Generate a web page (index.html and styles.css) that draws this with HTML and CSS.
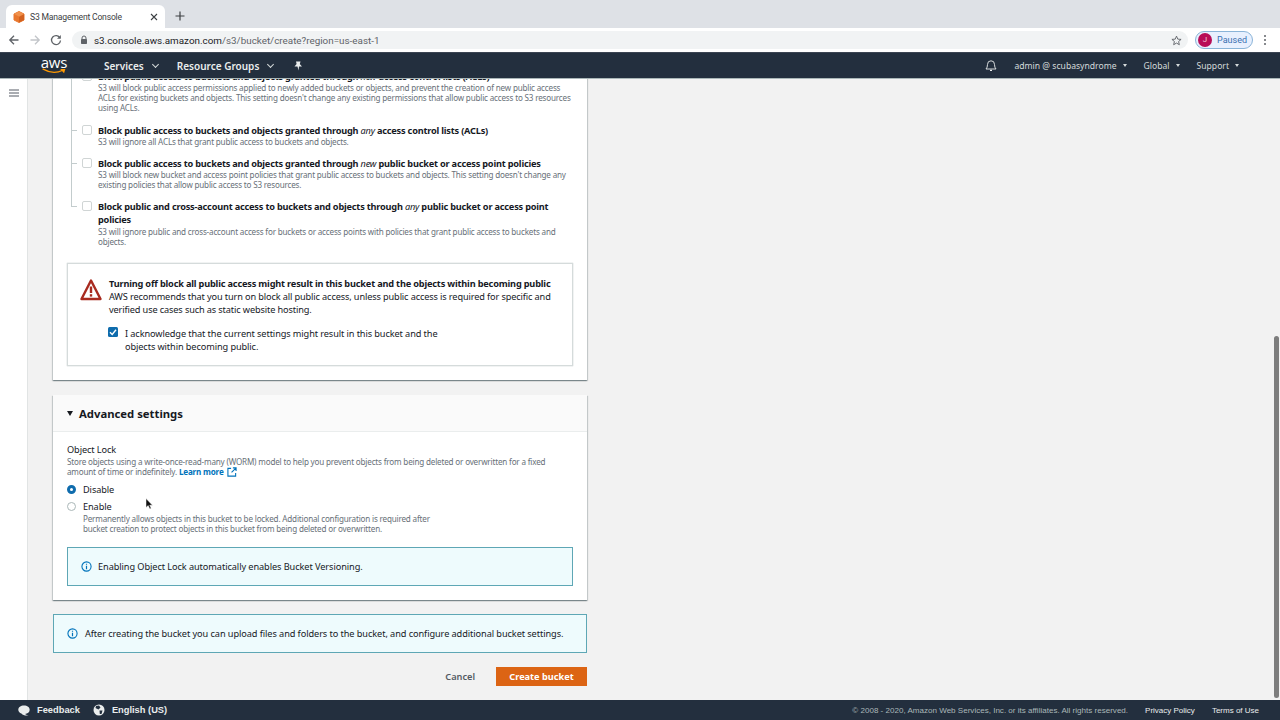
FILE: index.html
```html
<!DOCTYPE html>
<html>
<head>
  <title>S3 Management Console</title>
  <link rel="stylesheet" href="styles.css">
</head>
<body>
  <!-- Browser chrome -->
  <div class="tabstrip">
    <div class="tab">
      <svg class="favicon" viewBox="0 0 12 12" width="12" height="12">
        <path d="M6 0.5 L11 3 V9 L6 11.5 L1 9 V3 Z" fill="#e8772e" stroke="#e8772e" stroke-linejoin="round"/>
        <path d="M6 6 L11 3 V9 L6 11.5 Z" fill="#d2611f"/>
        <path d="M6 0.5 L11 3 L6 5.5 L1 3 Z" fill="#f0914c"/>
      </svg>
      <span class="tab-title">S3 Management Console</span>
      <svg class="tab-close" viewBox="0 0 8 8" width="8" height="8"><path d="M1 1 L7 7 M7 1 L1 7" stroke="#3c4043" stroke-width="1.1"/></svg>
    </div>
    <svg class="tab-new" viewBox="0 0 10 10" width="10" height="10"><path d="M5 0.5 V9.5 M0.5 5 H9.5" stroke="#3c4043" stroke-width="1.2"/></svg>
  </div>
  <div class="toolbar">
    <svg class="tool-icon" viewBox="0 0 12 12" width="12" height="12"><path d="M10.5 6 H2 M6 1.8 L1.8 6 L6 10.2" fill="none" stroke="#5f6368" stroke-width="1.3"/></svg>
    <svg class="tool-icon" viewBox="0 0 12 12" width="12" height="12"><path d="M1.5 6 H10 M6 1.8 L10.2 6 L6 10.2" fill="none" stroke="#c2c5c9" stroke-width="1.3"/></svg>
    <svg class="tool-icon" viewBox="0 0 12 12" width="12" height="12"><path d="M10 4 A4.5 4.5 0 1 0 10.5 6.5" fill="none" stroke="#5f6368" stroke-width="1.3"/><path d="M10.8 1 V4.8 H7 Z" fill="#5f6368"/></svg>
    <div class="omnibox">
      <svg class="lock" viewBox="0 0 8 10" width="8" height="10"><path d="M2 4.5 V3 A2 2 0 0 1 6 3 V4.5" fill="none" stroke="#5f6368" stroke-width="1"/><rect x="1" y="4" width="6" height="5" rx="0.7" fill="#5f6368"/></svg>
      <span class="url">s3.console.aws.amazon.com<span class="url-path">/s3/bucket/create?region=us-east-1</span></span>
      <svg class="star-icon" viewBox="0 0 12 12" width="11" height="11"><path d="M6 1.2 L7.4 4.5 L11 4.8 L8.3 7.1 L9.1 10.6 L6 8.8 L2.9 10.6 L3.7 7.1 L1 4.8 L4.6 4.5 Z" fill="none" stroke="#5f6368" stroke-width="1"/></svg>
    </div>
    <div class="profile">
      <span class="avatar">J</span>
      <span class="paused">Paused</span>
    </div>
    <svg class="kebab" viewBox="0 0 4 12" width="4" height="12"><circle cx="2" cy="2" r="1" fill="#5f6368"/><circle cx="2" cy="6" r="1" fill="#5f6368"/><circle cx="2" cy="10" r="1" fill="#5f6368"/></svg>
  </div>

  <!-- AWS top nav -->
  <nav class="topnav">
    <div class="aws-logo">
      <span class="aws-word">aws</span>
      <svg viewBox="0 0 28 8" width="28" height="7"><path d="M1 1 Q13 8 24 2.5" fill="none" stroke="#f90" stroke-width="1.4"/><path d="M21 1 L27 1 L25.5 6 Z" fill="#f90"/></svg>
    </div>
    <a class="nav-link nav-services">Services<i class="chev"></i></a>
    <a class="nav-link nav-groups">Resource Groups<i class="chev"></i></a>
    <svg class="nav-pin" viewBox="0 0 10 10" width="10" height="10"><path d="M3 0.5 H7.5 L6.8 3 L9 5.5 H6 L5.5 9.5 L4.5 5.5 H1.5 L3.6 3 Z" fill="#eaeded"/></svg>
    <div class="nav-right">
      <svg class="bell" viewBox="0 0 12 13" width="12" height="13"><path d="M1 10 Q2.5 8.5 2.5 5.5 Q2.5 1.8 6 1.8 Q9.5 1.8 9.5 5.5 Q9.5 8.5 11 10 Z" fill="none" stroke="#eaeded" stroke-width="0.9"/><path d="M5 11.3 H7" stroke="#eaeded" stroke-width="1.2"/></svg>
      <a class="nav-item nav-admin">admin @ scubasyndrome<i class="caret"></i></a>
      <a class="nav-item nav-global">Global<i class="caret"></i></a>
      <a class="nav-item nav-support">Support<i class="caret"></i></a>
    </div>
  </nav>

  <div class="layout">
    <aside class="sidebar">
      <svg viewBox="0 0 10 8" width="10" height="8"><path d="M0 1 H10 M0 4 H10 M0 7 H10" stroke="#545b64" stroke-width="1"/></svg>
    </aside>
    <main class="content">
      <section class="card card-access">
        <div class="tree">
          <div class="tree-row tree-row-clipped">
            <span class="box"></span>
            <div>
              <div class="opt-title">Block public access to buckets and objects granted through <em>new</em> access control lists (ACLs)</div>
              <div class="opt-desc">S3 will block public access permissions applied to newly added buckets or objects, and prevent the creation of new public access ACLs for existing buckets and objects. This setting doesn't change any existing permissions that allow public access to S3 resources using ACLs.</div>
            </div>
          </div>
          <div class="tree-row">
            <span class="box"></span>
            <div>
              <div class="opt-title">Block public access to buckets and objects granted through <em>any</em> access control lists (ACLs)</div>
              <div class="opt-desc">S3 will ignore all ACLs that grant public access to buckets and objects.</div>
            </div>
          </div>
          <div class="tree-row">
            <span class="box"></span>
            <div>
              <div class="opt-title">Block public access to buckets and objects granted through <em>new</em> public bucket or access point policies</div>
              <div class="opt-desc">S3 will block new bucket and access point policies that grant public access to buckets and objects. This setting doesn't change any existing policies that allow public access to S3 resources.</div>
            </div>
          </div>
          <div class="tree-row tree-row-last">
            <span class="box"></span>
            <div>
              <div class="opt-title">Block public and cross-account access to buckets and objects through <em>any</em> public bucket or access point policies</div>
              <div class="opt-desc">S3 will ignore public and cross-account access for buckets or access points with policies that grant public access to buckets and objects.</div>
            </div>
          </div>
        </div>

        <div class="warning">
          <svg class="warn-icon" viewBox="0 0 22 24" width="22" height="24">
            <path d="M11 2.5 L20.5 21 H1.5 Z" fill="none" stroke="#a82a1f" stroke-width="2.4" stroke-linejoin="round"/>
            <rect x="9.8" y="8.5" width="2.4" height="6.5" fill="#a82a1f"/>
            <rect x="9.8" y="16.2" width="2.4" height="2.4" fill="#a82a1f"/>
          </svg>
          <div class="warn-body">
            <div class="warn-title">Turning off block all public access might result in this bucket and the objects within becoming public</div>
            <div class="warn-text">AWS recommends that you turn on block all public access, unless public access is required for specific and verified use cases such as static website hosting.</div>
            <div class="ack">
              <span class="box-checked">
                <svg viewBox="0 0 10 10" width="10" height="10"><path d="M2 5.2 L4.2 7.4 L8 2.8" fill="none" stroke="#fff" stroke-width="1.4"/></svg>
              </span>
              <div class="ack-text">I acknowledge that the current settings might result in this bucket and the objects within becoming public.</div>
            </div>
          </div>
        </div>
      </section>

      <section class="card card-advanced">
        <header class="card-head">
          <i class="tri"></i>
          <h2>Advanced settings</h2>
        </header>
        <div class="card-body">
          <div class="lock-label">Object Lock</div>
          <div class="lock-desc">Store objects using a write-once-read-many (WORM) model to help you prevent objects from being deleted or overwritten for a fixed amount of time or indefinitely. <a class="learn">Learn more</a>
            <svg class="ext" viewBox="0 0 11 11" width="10" height="10"><path d="M4.5 1.5 H1 V10 H9.5 V6.5" fill="none" stroke="#0073bb" stroke-width="1.2"/><path d="M5 6 L9.8 1.2 M6.5 1 H10 V4.5" fill="none" stroke="#0073bb" stroke-width="1.2"/></svg>
          </div>
          <div class="radio-row radio-first"><span class="radio radio-on"></span><span class="radio-label">Disable</span></div>
          <div class="radio-row"><span class="radio"></span><span class="radio-label">Enable</span></div>
          <div class="radio-desc">Permanently allows objects in this bucket to be locked. Additional configuration is required after bucket creation to protect objects in this bucket from being deleted or overwritten.</div>
          <div class="info info-inner">
            <svg class="info-icon" viewBox="0 0 12 12" width="11" height="11"><circle cx="6" cy="6" r="5" fill="none" stroke="#0073bb" stroke-width="1.2"/><path d="M6 5.2 V9 M6 3 V4.2" stroke="#0073bb" stroke-width="1.3"/></svg>
            <span>Enabling Object Lock automatically enables Bucket Versioning.</span>
          </div>
        </div>
      </section>

      <div class="info info-outer">
        <svg class="info-icon" viewBox="0 0 12 12" width="11" height="11"><circle cx="6" cy="6" r="5" fill="none" stroke="#0073bb" stroke-width="1.2"/><path d="M6 5.2 V9 M6 3 V4.2" stroke="#0073bb" stroke-width="1.3"/></svg>
        <span>After creating the bucket you can upload files and folders to the bucket, and configure additional bucket settings.</span>
      </div>

      <div class="actions">
        <a class="btn-cancel">Cancel</a>
        <a class="btn-create">Create bucket</a>
      </div>
    </main>
    <div class="scroll-thumb"></div>
    <svg class="cursor" viewBox="0 0 8 12" width="8" height="12"><path d="M1 0.5 V9.5 L3.2 7.6 L4.8 11 L6.2 10.3 L4.7 7.2 H7.5 Z" fill="#111" stroke="#fff" stroke-width="0.5"/></svg>
  </div>

  <footer class="footer">
    <svg class="foot-icon" viewBox="0 0 12 11" width="12" height="11"><path d="M6 0.5 C9.3 0.5 11.7 2.3 11.7 4.8 C11.7 7.2 9.5 8.8 7 8.9 C8 9.8 9.5 10.3 10.5 10.4 C8 10.9 5 10.5 3.4 8.6 C1.6 8 0.3 6.6 0.3 4.8 C0.3 2.3 2.7 0.5 6 0.5 Z" fill="#eaeded"/></svg>
    <span class="foot-link foot-feedback">Feedback</span>
    <svg class="foot-icon" viewBox="0 0 12 12" width="12" height="12"><circle cx="6" cy="6" r="5.5" fill="#eaeded"/><path d="M3 2 L6 1.5 L7.5 3.5 L5.5 5.5 L4 4.8 L2.5 4 Z M6.5 6.5 L9.5 6.5 L8.5 10 L6.8 10 Z" fill="#232f3e"/></svg>
    <span class="foot-link">English (US)</span>
    <div class="foot-right">
      <span class="copyright">© 2008 - 2020, Amazon Web Services, Inc. or its affiliates. All rights reserved.</span>
      <span class="foot-link-sm">Privacy Policy</span>
      <span class="foot-link-sm">Terms of Use</span>
    </div>
  </footer>
</body>
</html>
```
FILE: styles.css
```css
html, body {
  margin: 0;
  padding: 0;
  height: 720px;
  overflow: hidden;
}
body {
  display: flex;
  flex-direction: column;
  background: #f2f2f2;
  font-family: "Noto Sans", sans-serif;
  color: #16191f;
}

/* Browser chrome */
.tabstrip {
  height: 28px;
  flex: none;
  background: #dee1e6;
  display: flex;
  align-items: flex-end;
  padding-left: 6px;
  font-family: Roboto, sans-serif;
}
.tab {
  width: 159px;
  height: 23px;
  box-sizing: border-box;
  background: #fff;
  border-radius: 6px 6px 0 0;
  display: flex;
  align-items: center;
  padding: 0 7px;
}
.favicon { flex: none; margin-right: 5px; }
.tab-title { font-size: 8.6px; letter-spacing: -0.2px; color: #3c4043; flex: 1; white-space: nowrap; }
.tab-new { margin: 0 0 7px 10px; }
.toolbar {
  height: 24px;
  flex: none;
  background: #fff;
  display: flex;
  align-items: center;
  padding-left: 8px;
  font-family: Roboto, sans-serif;
}
.tool-icon { flex: none; margin-right: 9px; }
.omnibox {
  width: 1116px;
  height: 18px;
  margin-left: 1px;
  box-sizing: border-box;
  background: #f1f3f4;
  border-radius: 9px;
  display: flex;
  align-items: center;
  padding: 0 6px 0 8px;
}
.lock { margin-right: 6px; }
.url { font-size: 9.85px; color: #202124; flex: 1; }
.url-path { color: #5f6368; }
.profile {
  width: 58px;
  height: 18px;
  margin-left: 7px;
  box-sizing: border-box;
  border: 1px solid #8ab4d8;
  border-radius: 9px;
  background: #e8f0fe;
  display: flex;
  align-items: center;
  padding-left: 2px;
}
.avatar {
  width: 14px;
  height: 14px;
  border-radius: 50%;
  background: #b80d57;
  color: #f5c6d8;
  font-size: 8px;
  text-align: center;
  line-height: 14px;
}
.paused { font-size: 9px; color: #3a6fb0; margin-left: 5px; }
.kebab { margin-left: 10px; }

/* Top nav */
.topnav {
  height: 27px;
  flex: none;
  box-sizing: border-box;
  background: #232f3e;
  border-bottom: 1px solid #aab7b8;
  border-top: 1px solid #3b4452;
  display: flex;
  align-items: center;
  color: #eaeded;
}
.aws-logo {
  margin-left: 40px;
  width: 28px;
  display: flex;
  flex-direction: column;
  align-items: center;
}
.aws-word { font-size: 15px; line-height: 11px; color: #fff; font-family: "Open Sans", sans-serif; letter-spacing: -0.2px; }
.aws-logo svg { margin-top: 0; }
.nav-link { font-size: 10px; font-weight: 600; display: flex; align-items: center; white-space: nowrap; }
.nav-services { margin-left: 36px; }
.nav-groups { margin-left: 19px; }
.chev {
  width: 4px;
  height: 4px;
  border-right: 1px solid #d5dbdb;
  border-bottom: 1px solid #d5dbdb;
  transform: rotate(45deg);
  margin: -2px 0 0 9px;
}
.nav-pin { margin-left: 20px; }
.nav-right { margin-left: auto; display: flex; align-items: center; padding-right: 41px; }
.bell { margin-right: 17px; }
.nav-item { font-size: 8.6px; display: flex; align-items: center; white-space: nowrap; color: #d5dbdb; }
.nav-global { margin-left: 17px; }
.nav-support { margin-left: 17px; }
.caret {
  width: 0;
  height: 0;
  border-left: 2.5px solid transparent;
  border-right: 2.5px solid transparent;
  border-top: 3px solid #d5dbdb;
  margin-left: 6px;
}

/* Layout */
.layout {
  flex: 1;
  min-height: 0;
  display: flex;
  position: relative;
  overflow: hidden;
}
.sidebar {
  width: 27px;
  flex: none;
  background: #fff;
  border-right: 1px solid #e1e4e4;
  padding-top: 10px;
  position: relative;
  z-index: 1;
}
.sidebar svg { display: block; margin: 0 auto; }
.content {
  width: 534px;
  margin-left: 25px;
  margin-top: -9px;
}
.card {
  background: #fff;
  box-shadow: 0 1px 1px 0 rgba(0, 28, 36, 0.3), 1px 1px 1px 0 rgba(0, 28, 36, 0.15), -1px 1px 1px 0 rgba(0, 28, 36, 0.15);
}

/* Block public access tree */
.card-access { padding: 0 14px 14px; height: 310px; box-sizing: border-box; }
.tree { padding-left: 4px; }
.tree-row {
  display: flex;
  gap: 6px;
  padding-left: 11px;
  margin-bottom: 10px;
  position: relative;
}
.tree-row-clipped { margin-bottom: 11px; }
.tree-row::before {
  content: "";
  position: absolute;
  left: 0;
  top: 0;
  bottom: -11px;
  border-left: 1px solid #c3cccd;
}
.tree-row::after {
  content: "";
  position: absolute;
  left: 0;
  top: 6px;
  width: 6px;
  border-top: 1px solid #c3cccd;
}
.tree-row-last::before { bottom: auto; height: 7px; }
.tree-row-last .opt-desc { margin-top: 1px; }
.box {
  flex: none;
  width: 10px;
  height: 10px;
  margin-top: 1px;
  border: 1px solid #d0d5d5;
  border-radius: 2px;
  background: #fff;
  box-sizing: border-box;
}
.opt-title { font-size: 9.2px; letter-spacing: -0.2px; line-height: 13px; font-weight: 700; }
.opt-title em { font-weight: 400; }
.opt-desc { font-size: 8.1px; letter-spacing: -0.18px; line-height: 10px; color: #687078; }

.warning {
  margin-top: 16px;
  height: 103px;
  box-sizing: border-box;
  border: 1px solid #d5dbdb;
  box-shadow: 0 0 1px #aab7b8;
  display: flex;
  padding: 13px 13px 0;
  gap: 7px;
}
.warn-icon { flex: none; margin: 1px 0 0 -1px; }
.warn-title { font-size: 9.2px; letter-spacing: -0.18px; line-height: 13px; font-weight: 700; }
.warn-text { font-size: 9.2px; letter-spacing: -0.13px; line-height: 13px; }
.ack { display: flex; gap: 7px; margin: 11px 0 0 -1px; }
.box-checked {
  flex: none;
  width: 10px;
  height: 10px;
  border-radius: 1.5px;
  background: #0f6cad;
  display: flex;
}
.ack-text { font-size: 9.2px; letter-spacing: -0.1px; line-height: 13px; width: 320px; }

/* Advanced settings */
.card-advanced { margin-top: 15px; height: 205px; }
.card-head {
  height: 37px;
  box-sizing: border-box;
  background: #fafafa;
  border-bottom: 1px solid #eaeded;
  display: flex;
  align-items: center;
  padding-left: 14px;
}
.card-head h2 { margin: 0 0 0 6px; font-size: 11.3px; font-weight: 700; }
.tri {
  width: 0;
  height: 0;
  border-left: 3.5px solid transparent;
  border-right: 3.5px solid transparent;
  border-top: 5px solid #16191f;
}
.card-body { padding: 12px 14px 0; }
.lock-label { font-size: 9.2px; letter-spacing: -0.1px; line-height: 12px; }
.lock-desc { font-size: 8.1px; letter-spacing: -0.18px; line-height: 10px; color: #687078; margin-top: 1px; }
.learn { color: #0073bb; font-weight: 700; }
.ext { vertical-align: -2px; margin-left: 2px; }
.radio-row { display: flex; align-items: center; gap: 7px; height: 13px; margin-top: 4px; }
.radio-first { margin-top: 6px; }
.radio {
  flex: none;
  width: 9px;
  height: 9px;
  box-sizing: border-box;
  border: 1px solid #aab7b8;
  border-radius: 50%;
  background: #fff;
}
.radio-on { border: 3px solid #0f6cad; }
.radio-label { font-size: 9.2px; letter-spacing: -0.1px; }
.radio-desc { font-size: 8.1px; letter-spacing: -0.18px; line-height: 10px; color: #687078; margin: 1px 0 0 16px; width: 360px; }
.info {
  display: flex;
  align-items: center;
  box-sizing: border-box;
  height: 39px;
  background: #eefbfd;
  border: 1px solid #5ea7b5;
  font-size: 9.2px;
  letter-spacing: -0.08px;
  padding-bottom: 1px;
}
.info-inner { margin-top: 13px; padding-left: 13px; gap: 6px; }
.info-outer { margin-top: 14px; padding-left: 13px; gap: 7px; }
.info-icon { flex: none; }

.actions {
  display: flex;
  justify-content: flex-end;
  align-items: center;
  margin-top: 14px;
}
.btn-cancel { font-size: 9.2px; font-weight: 600; color: #545b64; margin-right: 21px; }
.btn-create {
  width: 91px;
  height: 19px;
  line-height: 19px;
  text-align: center;
  background: #dc6414;
  color: #fff;
  font-size: 9.2px;
  font-weight: 700;
}

.scroll-thumb {
  position: absolute;
  right: 1px;
  top: 257px;
  bottom: 2px;
  width: 5px;
  border-radius: 3px;
  background: #7d7d7d;
}
.cursor { position: absolute; left: 145px; top: 419px; }

/* Footer */
.footer {
  height: 20px;
  flex: none;
  background: #232f3e;
  display: flex;
  align-items: center;
  padding: 0 21px 0 18px;
  font-family: "Liberation Sans", Arial, sans-serif;
  position: relative;
  z-index: 2;
}
.foot-link { font-size: 9.3px; font-weight: 700; color: #eaeded; margin-left: 7px; }
.foot-feedback { margin-right: 13px; }
.foot-right { margin-left: auto; display: flex; align-items: center; gap: 17px; }
.copyright { font-size: 8.05px; color: #aab7b8; }
.foot-link-sm { font-size: 8px; color: #eaeded; }
```
